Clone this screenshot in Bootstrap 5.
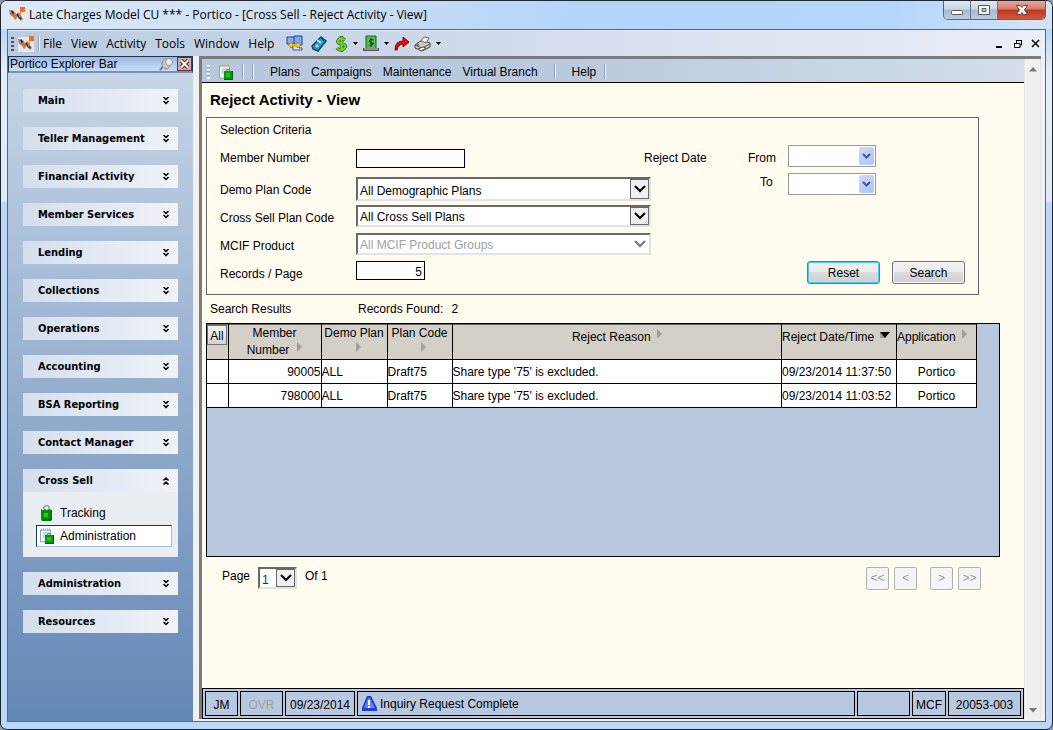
<!DOCTYPE html>
<html lang="en">
<head>
<meta charset="utf-8">
<meta name="viewport" content="width=device-width, initial-scale=1">
<title>Late Charges Model CU *** - Portico - [Cross Sell - Reject Activity - View]</title>
<link href="https://cdn.jsdelivr.net/npm/bootstrap@5.3.0/dist/css/bootstrap.min.css" rel="stylesheet">
<style>
  :root { --panel: #b8c9df; --cream: #fffbef; --ui: "Liberation Sans", Arial, sans-serif; --segoe: "Open Sans", "Noto Sans", sans-serif; }
  body { font: 12px/16px var(--ui); color: #000; background: #8f9aa8; }
  button, input, select { font: inherit; color: inherit; }
  a { color: inherit; text-decoration: none; }
  svg { display: block; flex: none; }

  /* window frame */
  .win { min-height: 100vh; border: 1px solid #22262e; border-radius: 7px; padding: 0 6px 7px; background: linear-gradient(to bottom, #d3e5f9 0, #b9d8fb 30px, #e2edf9 70px, #dcebfa 200px, #b9d8fb 202px, #b9d8fb 100%); overflow: hidden; }
  .titlebar { height: 28px; margin: 0 -6px; padding-left: 8px; background: linear-gradient(100deg, #dce9f7 0, #c9ddf4 35%, #b3d5fb 55%, #b5d6fb 85%, #d4e5f8 100%); font-family: var(--segoe); }
  .win-btns { height: 19px; margin-right: 6px; border: 1px solid #5c6470; border-top: 0; border-radius: 0 0 5px 5px; overflow: hidden; }
  .win-btns button { border: 0; border-right: 1px solid #6b7684; padding: 0; width: 27px; background: linear-gradient(#dfe8f2 0, #cbd7e5 45%, #a9b9cd 50%, #bccbdd 100%); }
  .win-btns button.quit { width: 47px; border: 0; background: linear-gradient(#e9a99b 0, #d9796a 45%, #bf3722 50%, #cf5a3c 100%); }
  .client { border: 1px solid #5d6772; background: #f0f0f0; }

  /* menu */
  .menubar { height: 26px; padding-left: 3px; background: linear-gradient(to right, #b9cae1, #ebeff6); font-family: var(--segoe); border-top: 1px solid #dcebfb; }
  .menubar nav { gap: 9px; margin-left: 3px; }
  .tool-nav { gap: 11px; }
  .mdi button, .plain { border: 0; background: none; padding: 0; }
  .grip { width: 3px; height: 14px; background: repeating-linear-gradient(#3e5475 0 2px, transparent 2px 4px); }
  .grip.pale { background: repeating-linear-gradient(#f1f4f9 0 2px, #8c9cb4 2px 3px, transparent 3px 4px); }
  .vbar { width: 2px; height: 15px; border-left: 1px solid #8fa0b8; border-right: 1px solid #f2f5fa; }

  /* explorer bar */
  .side { width: 185px; background: linear-gradient(#c9d6e7, #6387b6); }
  .side-head { height: 17px; padding-left: 1px; border: 1px solid #1d3557; border-bottom: 2px solid #6f92c0; background: linear-gradient(#9dbae2, #c9dcf5); margin: 0 0 16px; line-height: 15px; }
  .side-group { margin: 0 15px 15px; background: #e9eef3; }
  .side-group > button { height: 23px; width: 100%; border: 0; padding: 0 8px 0 15px; font: bold 11px/24px "DejaVu Sans Condensed", Tahoma, "DejaVu Sans", sans-serif; background: linear-gradient(to right, #d4dfed, #f0f3f8); }
  .side-links { display: grid; gap: 1px; padding: 10px 6px 10px 13px; }
  .side-links a { height: 22px; padding-left: 2px; border: 1px solid transparent; gap: 5px; }
  .side-links a.active { background: #fff; border-color: #1e3550 #a9bcd8 #a9bcd8 #1e3550; }

  /* work area */
  .work { margin: 0 4px 2px 6px; border: solid #7b7b7b; border-width: 3px 0 0 3px; background: var(--cream); min-width: 0; }
  .toolbar { height: 24px; padding: 2px 0 0 5px; border-bottom: 1px solid #000; background: linear-gradient(to right, #b7c8de, #b9cadf 45%, #d3dee9); }
  .page-title { font: bold 15px/18px var(--ui); margin: 8px 0 8px 8px; }
  .criteria { margin: 0 45px 0 4px; padding: 4px 13px 5px; border: 1px solid #666; box-shadow: inset 1px 1px #fff; }
  .crit-grid { display: grid; grid-template-columns: 136px 296px 1fr; grid-auto-rows: 28px; align-items: start; margin-top: 11px; line-height: 26px; }
  .crit-grid .first { line-height: 18px; }
  .dates { display: grid; grid-template-columns: 104px 40px 88px; grid-auto-rows: 28px; align-items: start; width: 232px; margin: -4px 0 0 -8px; }
  .boxed { display: block; height: 19px; border: 1px solid #000; border-radius: 0; padding: 2px 2px 0; background: #fff; line-height: 16px; }
  .combo { position: relative; width: 295px; }
  .combo select { display: block; width: 100%; height: 22px; appearance: none; border: 2px solid; border-color: #696969 #e3e3e3 #e3e3e3 #696969; border-radius: 0; background: #fff; padding: 1px 0 0 2px; line-height: 16px; opacity: 1; }
  .combo select:disabled { color: #a0a0a0; }
  .combo.tall select { height: 24px; padding-top: 4px; }
  .combo .arrow { position: absolute; inset: 2px 2px 2px auto; width: 19px; border: 1px solid #696969; background: #efefef; pointer-events: none; }
  .combo .arrow.off { border: 0; background: none; }
  .combo.date { width: 88px; }
  .combo.date select { border: 1px solid #999; }
  .combo.date .arrow { width: 15px; border: 0; border-radius: 2px; color: #405a8c; background: linear-gradient(135deg, #cddafb, #adc4f4); }
  .combo.mini { width: 39px; }
  .combo.mini select { padding-top: 3px; color: #003a6b; }
  .push { width: 73px; height: 23px; border: 1px solid #707070; border-radius: 3px; background: linear-gradient(#f1f1f1 0, #ebebeb 48%, #dcdcdc 50%, #cfcfcf 100%); padding: 1px 0 0; line-height: 20px; box-shadow: inset 0 0 0 1px #f8f8f8; }
  .push.default { border-color: #5a7f93; box-shadow: inset 0 0 0 1px #46cdf2; }
  .summary { margin: 6px 8px; }
  .paging { margin: 10px 43px 0 20px; line-height: 18px; }
  .pager-set { display: flex; gap: 5px; }
  .pager { width: 23px; height: 23px; border: 1px solid #adb2b5; border-radius: 2px; background: #f4f4f4; color: #9a9a9a; padding: 0; line-height: 21px; }

  /* results */
  .results { margin: 0 24px 0 4px; min-height: 234px; border: 1px solid #000; background: var(--panel); padding-right: 22px; }
  .grid-table { width: 100%; table-layout: fixed; border-collapse: collapse; line-height: 17px; border: 1px solid #666; border-left: 0; }
  .grid-table th { height: 34px; background: #d4d0c8; font-weight: normal; text-align: center; vertical-align: top; padding: 0; border-right: 1px solid #000; border-bottom: 1px solid #000; white-space: nowrap; }
  .grid-table td { height: 24px; background: #fff; padding: 1px 0 0; border-right: 1px solid #000; border-bottom: 1px solid #000; white-space: nowrap; vertical-align: middle; }
  .grid-table th.mid { padding-top: 4px; }
  .tri { display: inline-block; width: 0; height: 0; border: solid transparent; border-width: 5px 0 5px 5px; border-left-color: #a09e98; vertical-align: top; margin-left: 8px; }
  .mid .tri { margin-left: 6px; }
  .tri.down { border-width: 6px 5px 0; border-top-color: #000; margin-top: 3px; }
  .all-btn { display: block; width: 20px; height: 20px; border: 1px solid #707070; padding: 0; background: linear-gradient(#f1f1f1 0, #e9e9e9 50%, #d0d0d0 100%); line-height: 20px; }

  .status { border: 1px solid #000; background: var(--panel); padding: 2px; gap: 2px; }
  .status > div { height: 25px; border: 1px solid #000; line-height: 26px; text-align: center; white-space: nowrap; }
  .status .message { padding-left: 3px; gap: 2px; }
  .scroller { flex: none; width: 17px; background: #efefef; border-left: 1px solid #e6e6e6; border-right: 1px solid #e3e3e3; padding: 8px 0 6px; }
</style>
</head>
<body>
<svg width="0" height="0" class="position-absolute" aria-hidden="true">
  <defs>
    <symbol id="logo" viewBox="0 0 16 16"><rect y="1" width="16" height="15" fill="#e9e7e6"/><path d="M0 3h3l4 5 2-3 5 7-2 2-4-4-1 3-4-4-2-1z" fill="#8b8b90"/><path d="M3 4l3 5M8 7l4 5" stroke="#1f2227" stroke-width="2" fill="none"/><path d="M5 4l2 3-1 6-2-4zM9 7l3-2-1 7z" fill="#f0702a"/><rect x="11" y="0" width="5" height="5" fill="#ff6a13"/></symbol>
    <symbol id="bag" viewBox="0 0 16 16"><path d="M5 4V2q3-3 5 0v2" fill="none" stroke="#a9a9a9" stroke-width="2"/><path d="M2 4l2 1 2-1 2 1 2-1 3 1v10l-1 1H3l-1-1z" fill="#0a8f0a"/><path d="M12 5v10H4" stroke="#046004" fill="none"/><rect x="5" y="8" width="4" height="4" fill="#14d414"/></symbol>
    <symbol id="admin" viewBox="0 0 16 16"><path d="M1.500 2h10v12h-10z" fill="#eef6fb" stroke="#8ba9bd"/><path d="M2 1.500h10" stroke="#c7a76b" stroke-width="2" stroke-dasharray="1 1"/><path d="M4 5h6M4 7h3M4 9h2" stroke="#8fc0dc"/><path d="M8 7q2-3 4 0" fill="none" stroke="#888" stroke-width="1.500"/><rect x="6" y="7" width="9" height="9" fill="#0a930a"/><path d="M14.500 7v8.500H6" fill="none" stroke="#046004"/><rect x="8" y="9" width="4" height="4" fill="#13cc13"/></symbol>
    <symbol id="dn" viewBox="0 0 8 8"><path d="M1.500 0L4 2.500 6.500 0M1.500 4L4 6.500 6.500 4" fill="none" stroke="#000" stroke-width="1.500"/></symbol>
    <symbol id="up" viewBox="0 0 8 8"><path d="M1.500 3.500L4 1l2.500 2.500M1.500 7.500L4 5l2.500 2.500" fill="none" stroke="#000" stroke-width="1.500"/></symbol>
    <symbol id="chev" viewBox="0 0 12 8"><path d="M1 1l5 5 5-5" fill="none" stroke="currentColor" stroke-width="2"/></symbol>
    <symbol id="chev-small" viewBox="0 0 9 6"><path d="M1 1l3.500 3.500L8 1" fill="none" stroke="currentColor" stroke-width="2"/></symbol>
  </defs>
</svg>

<div class="win d-flex flex-column">
  <header class="titlebar d-flex align-items-start">
    <div class="d-flex align-items-center h-100 flex-grow-1"><svg width="16" height="16"><use href="#logo"/></svg><span class="ms-1">Late Charges Model CU *** - Portico - [Cross Sell - Reject Activity - View]</span></div>
    <div class="win-btns d-flex">
      <button aria-label="Minimize"><svg class="mx-auto" width="14" height="14"><rect x="1.500" y="7.500" width="11" height="4" rx="1" fill="#fff" stroke="#555c68"/></svg></button>
      <button aria-label="Maximize"><svg class="mx-auto" width="14" height="14"><path d="M1.500 2.500h11v9h-11zM5 5.500v3h4v-3z" fill="#fff" fill-rule="evenodd" stroke="#555c68"/></svg></button>
      <button class="quit" aria-label="Close"><svg class="mx-auto" width="14" height="14"><path d="M1.500 2.500h4L7 4.500l1.500-2h4L9.500 7l3 4.500h-4L7 9.500l-1.500 2h-4l3-4.500z" fill="#fff" stroke="#5e4550"/></svg></button>
    </div>
  </header>

  <div class="client d-flex flex-column flex-grow-1">
    <div class="menubar d-flex align-items-center">
      <span class="grip"></span>
      <svg class="ms-1" width="16" height="16"><use href="#logo"/></svg>
      <span class="vbar ms-1"></span>
      <nav class="d-flex"><a href="#">File</a><a href="#">View</a><a href="#">Activity</a><a href="#">Tools</a><a href="#">Window</a><a href="#">Help</a></nav>
      <div class="d-flex align-items-center ms-2 ps-1">
        <button class="plain" aria-label="Network"><svg width="17" height="17"><path d="M1 2h8v7H1z" fill="#7fb0f5" stroke="#27408e"/><path d="M8 1h8v9H8z" fill="#78a7f2" stroke="#27408e"/><path d="M4 12h3v3h9v-2h-3v-3" fill="#dfe3ee" stroke="#4c5878"/><path d="M2 10l4-3v2h5V7l4 3-4 3v-2H6v2z" fill="#ffd52a" stroke="#a47a00" stroke-width=".7"/></svg></button>
        <button class="plain ms-2" aria-label="Calculator"><svg width="16" height="16"><path d="M1 10L10 1l5 4-8 10-5-2z" fill="#2a9cc0" stroke="#0b4c69" stroke-width="1.500"/><path d="M6 4l4 3" stroke="#9ee5f5" stroke-width="2"/><path d="M10 2l3 3" stroke="#0b4c69"/><path d="M3 9l4 3" stroke="#075c81" stroke-dasharray="1 1"/><circle cx="6" cy="10" r="1.500" fill="#e8c9e8"/></svg></button>
        <button class="plain ms-2 d-flex align-items-center" aria-label="Cash"><svg width="13" height="16"><path d="M10 4Q6 1 3.500 4T7 8t2 4.500T2 12M6.500 0v16" fill="none" stroke="#2d7a12" stroke-width="3.500"/><path d="M10 4Q6 1 3.500 4T7 8t2 4.500T2 12M6.500 1v14" fill="none" stroke="#76cf2e" stroke-width="2"/></svg><svg class="ms-1" width="7" height="4"><path d="M1 0h5L3.500 3z"/></svg></button>
        <button class="plain ms-1 d-flex align-items-center" aria-label="Bills"><svg width="16" height="17"><path d="M3 1h10v13H3z" fill="#57b657" stroke="#1d641d"/><path d="M10.500 5Q7 3.500 6.500 5.500t3 2.500-3 2.500M8 3v9" fill="none" stroke="#063f06"/><path d="M0 14.500h16" stroke="#555" stroke-width="3"/><path d="M1 14h14" stroke="#ccc"/></svg><svg class="ms-1" width="7" height="4"><path d="M1 0h5L3.500 3z"/></svg></button>
        <button class="plain ms-1" aria-label="Redo"><svg width="16" height="16"><path d="M1 14Q1 5 9 5V1l6 5-6 5V8Q4 8 3 14z" fill="#e01010" stroke="#8b0000"/></svg></button>
        <button class="plain ms-1 d-flex align-items-center" aria-label="Print"><svg width="17" height="16"><path d="M1 9l7-5 8 3v4l-8 4-7-3z" fill="#cfcfc8" stroke="#444"/><path d="M7 5l3-4 5 1-3 5z" fill="#fff" stroke="#666"/><path d="M1 9l7 3 8-4M8 12v3" stroke="#555" fill="none"/><path d="M4 13l5-2 3 1-5 3z" fill="#fff" stroke="#555"/><circle cx="4" cy="9" r="1" fill="#d22"/></svg><svg class="ms-1" width="7" height="4"><path d="M1 0h5L3.500 3z"/></svg></button>
      </div>
      <div class="mdi d-flex align-items-center ms-auto me-1 gap-2">
        <button aria-label="Minimize child"><svg width="10" height="10"><path d="M1 8h6" stroke="#000" stroke-width="2"/></svg></button>
        <button aria-label="Restore child"><svg width="10" height="10"><path d="M3 1.500h6M1 4.500h6v4H1.500V4M3.500 1v3M8.500 1v5H7" fill="none" stroke="#000"/></svg></button>
        <button aria-label="Close child"><svg width="10" height="10"><path d="M1 1l7 7M8 1L1 8" stroke="#000" stroke-width="1.500"/></svg></button>
      </div>
    </div>

    <div class="d-flex flex-grow-1">
      <aside class="side flex-shrink-0">
        <div class="side-head d-flex justify-content-between"><span>Portico Explorer Bar</span>
          <span class="d-flex gap-1"><button class="plain" aria-label="Pin"><svg width="14" height="14"><path d="M1 13l4-5" stroke="#777" stroke-width="2"/><ellipse cx="7" cy="7" rx="4" ry="5" fill="#c7c7c7" stroke="#8a8a8a"/><circle cx="10" cy="5" r="3.500" fill="#e8e8e8" stroke="#999"/></svg></button>
          <button class="plain" aria-label="Close bar"><svg width="15" height="14"><rect x=".5" y=".5" width="14" height="13" fill="#d9a9a6" stroke="#7c2626"/><path d="M4 3.500l7 7M11 3.500l-7 7" stroke="#333" stroke-width="4"/><path d="M4 3.500l7 7M11 3.500l-7 7" stroke="#fff" stroke-width="2"/></svg></button></span></div>
        <div class="side-group"><button class="d-flex justify-content-between align-items-center">Main<svg width="8" height="8"><use href="#dn"/></svg></button></div>
        <div class="side-group"><button class="d-flex justify-content-between align-items-center">Teller Management<svg width="8" height="8"><use href="#dn"/></svg></button></div>
        <div class="side-group"><button class="d-flex justify-content-between align-items-center">Financial Activity<svg width="8" height="8"><use href="#dn"/></svg></button></div>
        <div class="side-group"><button class="d-flex justify-content-between align-items-center">Member Services<svg width="8" height="8"><use href="#dn"/></svg></button></div>
        <div class="side-group"><button class="d-flex justify-content-between align-items-center">Lending<svg width="8" height="8"><use href="#dn"/></svg></button></div>
        <div class="side-group"><button class="d-flex justify-content-between align-items-center">Collections<svg width="8" height="8"><use href="#dn"/></svg></button></div>
        <div class="side-group"><button class="d-flex justify-content-between align-items-center">Operations<svg width="8" height="8"><use href="#dn"/></svg></button></div>
        <div class="side-group"><button class="d-flex justify-content-between align-items-center">Accounting<svg width="8" height="8"><use href="#dn"/></svg></button></div>
        <div class="side-group"><button class="d-flex justify-content-between align-items-center">BSA Reporting<svg width="8" height="8"><use href="#dn"/></svg></button></div>
        <div class="side-group"><button class="d-flex justify-content-between align-items-center">Contact Manager<svg width="8" height="8"><use href="#dn"/></svg></button></div>
        <div class="side-group"><button class="d-flex justify-content-between align-items-center">Cross Sell<svg width="8" height="8"><use href="#up"/></svg></button>
          <div class="side-links">
            <a href="#" class="d-flex align-items-center"><svg width="16" height="16"><use href="#bag"/></svg>Tracking</a>
            <a href="#" class="active d-flex align-items-center"><svg width="16" height="16"><use href="#admin"/></svg>Administration</a>
          </div>
        </div>
        <div class="side-group"><button class="d-flex justify-content-between align-items-center">Administration<svg width="8" height="8"><use href="#dn"/></svg></button></div>
        <div class="side-group"><button class="d-flex justify-content-between align-items-center">Resources<svg width="8" height="8"><use href="#dn"/></svg></button></div>
      </aside>

      <div class="work d-flex flex-grow-1">
        <main class="d-flex flex-column flex-grow-1">
          <div class="toolbar d-flex align-items-center">
            <span class="grip pale"></span>
            <button class="plain ms-2" aria-label="Cross sell administration"><svg width="16" height="16"><use href="#admin"/></svg></button>
            <span class="vbar ms-2"></span><span class="vbar ms-2 me-1"></span>
            <nav class="tool-nav d-flex ms-2 ps-1"><a href="#">Plans</a><a href="#">Campaigns</a><a href="#">Maintenance</a><a href="#">Virtual Branch</a></nav>
            <span class="vbar ms-3 me-3"></span><a href="#">Help</a><span class="vbar ms-2"></span>
          </div>
          <h1 class="page-title">Reject Activity - View</h1>

          <form class="criteria">
            <div>Selection Criteria</div>
            <div class="crit-grid">
              <label class="first" for="member">Member Number</label>
              <input id="member" class="boxed" style="width:109px" type="text">
              <div class="dates first">
                <span class="pt-1">Reject Date</span><label for="from" class="pt-1">From</label><div class="combo date"><select id="from"><option></option></select><span class="arrow d-flex align-items-center justify-content-center"><svg width="9" height="6"><use href="#chev-small"/></svg></span></div>
                <span></span><label for="to" class="ps-2 ms-1">To</label><div class="combo date"><select id="to"><option></option></select><span class="arrow d-flex align-items-center justify-content-center"><svg width="9" height="6"><use href="#chev-small"/></svg></span></div>
              </div>
              <label for="demo">Demo Plan Code</label>
              <div class="combo tall"><select id="demo"><option>All Demographic Plans</option></select><span class="arrow d-flex align-items-center justify-content-center"><svg width="12" height="8"><use href="#chev"/></svg></span></div><span></span>
              <label for="cross">Cross Sell Plan Code</label>
              <div class="combo"><select id="cross"><option>All Cross Sell Plans</option></select><span class="arrow d-flex align-items-center justify-content-center"><svg width="12" height="8"><use href="#chev"/></svg></span></div><span></span>
              <label for="mcif">MCIF Product</label>
              <div class="combo"><select id="mcif" disabled><option>All MCIF Product Groups</option></select><span class="arrow off d-flex align-items-center justify-content-center text-secondary"><svg width="12" height="8"><use href="#chev"/></svg></span></div><span></span>
              <label for="records">Records / Page</label>
              <input id="records" class="boxed text-end" style="width:69px" type="text" value="5">
              <div class="d-flex justify-content-end"><button type="button" class="push default me-2">Reset</button><button type="button" class="push ms-1">Search</button></div>
            </div>
          </form>

          <div class="summary d-flex"><span style="width:148px">Search Results</span><span>Records Found:</span><span class="ms-2">2</span></div>

          <div class="results">
            <table class="grid-table">
              <colgroup><col style="width:21px"><col style="width:93px"><col style="width:66px"><col style="width:65px"><col><col style="width:115px"><col style="width:80px"></colgroup>
              <thead><tr>
                <th><button class="all-btn">All</button></th>
                <th>Member<br>Number<i class="tri"></i></th>
                <th>Demo Plan<br><i class="tri"></i></th>
                <th>Plan Code<br><i class="tri"></i></th>
                <th class="mid">Reject Reason<i class="tri"></i></th>
                <th class="mid text-start">Reject Date/Time<i class="tri down"></i></th>
                <th class="mid text-start">Application<i class="tri"></i></th>
              </tr></thead>
              <tbody>
                <tr><td></td><td class="text-end">90005</td><td>ALL</td><td>Draft75</td><td>Share type '75' is excluded.</td><td>09/23/2014 11:37:50</td><td class="text-center">Portico</td></tr>
                <tr><td></td><td class="text-end">798000</td><td>ALL</td><td>Draft75</td><td>Share type '75' is excluded.</td><td>09/23/2014 11:03:52</td><td class="text-center">Portico</td></tr>
              </tbody>
            </table>
          </div>

          <div class="paging d-flex align-items-start">
            <label for="page" class="me-2">Page</label>
            <div class="combo mini"><select id="page"><option>1</option></select><span class="arrow d-flex align-items-center justify-content-center"><svg width="12" height="8"><use href="#chev"/></svg></span></div>
            <span class="ms-2">Of 1</span>
            <div class="pager-set ms-auto"><button class="pager" disabled>&lt;&lt;</button><button class="pager" disabled>&lt;</button><button class="pager ms-2" disabled>&gt;</button><button class="pager" disabled>&gt;&gt;</button></div>
          </div>

          <footer class="status d-flex mt-auto">
            <div style="width:33px">JM</div><div style="width:43px;color:#a0a0a0">OVR</div><div style="width:70px">09/23/2014</div>
            <div class="message flex-grow-1 d-flex align-items-center"><svg width="17" height="17"><path d="M6 1h4l6 12v3H1v-3z" fill="#1f3fd0"/><path d="M7 3h2l5 10H3z" fill="#5b86f5"/><path d="M8 5v5M8 11v2" stroke="#fff" stroke-width="2"/></svg><span>Inquiry Request Complete</span></div>
            <div style="width:53px"></div><div style="width:34px">MCF</div><div style="width:73px">20053-003</div>
          </footer>
        </main>
        <div class="scroller d-flex flex-column justify-content-between align-items-center" aria-hidden="true"><svg width="8" height="5"><path d="M0 4.500L4 0l4 4.500z" fill="#777"/></svg><svg width="8" height="5"><path d="M0 0h8L4 4.500z" fill="#777"/></svg></div>
      </div>
    </div>
  </div>
</div>
<script src="https://cdn.jsdelivr.net/npm/bootstrap@5.3.0/dist/js/bootstrap.bundle.min.js"></script>
</body>
</html>
